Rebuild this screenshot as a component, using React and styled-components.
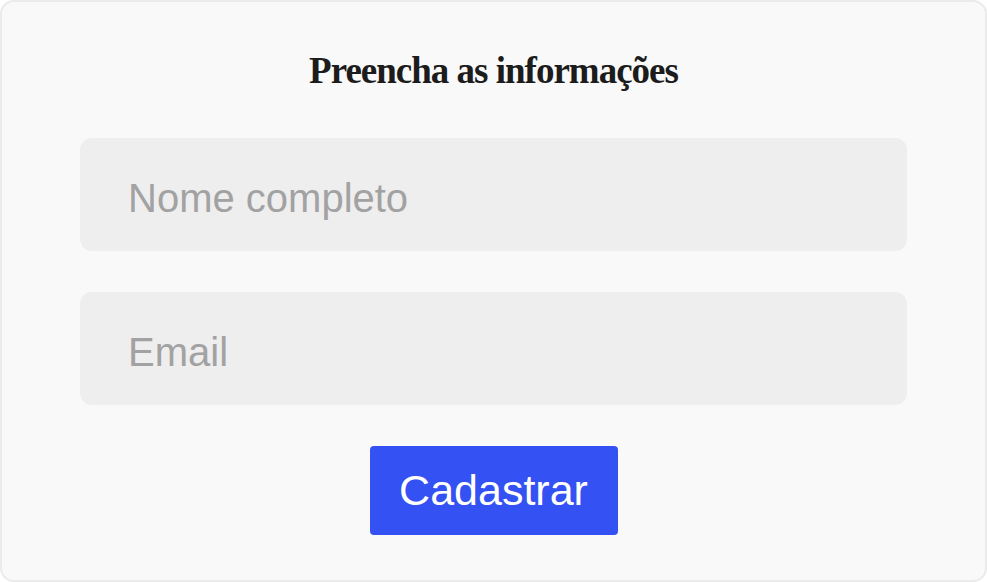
import React from "react";
import styled, { createGlobalStyle } from "styled-components";

const Global = createGlobalStyle`
    * {
        box-sizing: border-box;
    }
    body {
        margin: 0;
        background-color: #ffffff;
        font-family: "Liberation Sans", Arial, sans-serif;
    }
`;

function App() {
    return (
        <>
            <Global />
            <Card>
                <Title>Preencha as informações</Title>
                <Form onSubmit={(e) => e.preventDefault()}>
                    <Field type="text" placeholder="Nome completo" />
                    <Field type="email" placeholder="Email" />
                    <Button type="submit">Cadastrar</Button>
                </Form>
            </Card>
        </>
    );
}

export default App;

const Card = styled.div`
    width: 987px;
    height: 582px;
    background-color: #f9f9f9;
    border: 2px solid #ebebeb;
    border-radius: 14px;
    padding: 50px 78px 0;
    display: flex;
    flex-direction: column;
    align-items: center;
`;

const Title = styled.h1`
    margin: 0 0 49px;
    font-family: "Liberation Serif", "Times New Roman", serif;
    font-weight: 700;
    font-size: 37px;
    line-height: 37px;
    letter-spacing: -1px;
    color: #1c1c1c;
`;

const Form = styled.form`
    width: 100%;
    display: flex;
    flex-direction: column;
    align-items: center;
    gap: 41px;
`;

const Field = styled.input`
    width: 100%;
    height: 113px;
    border: none;
    outline: none;
    border-radius: 12px;
    background-color: #eeeeee;
    padding: 8px 48px 0;
    font-family: "Liberation Sans", Arial, sans-serif;
    font-size: 40px;
    color: #333;
    &::placeholder {
        color: #a2a2a2;
    }
`;

const Button = styled.button`
    width: 248px;
    height: 89px;
    border: none;
    border-radius: 4px;
    background-color: #3451f3;
    color: #ffffff;
    font-family: "Liberation Sans", Arial, sans-serif;
    font-size: 43px;
    cursor: pointer;
`;
